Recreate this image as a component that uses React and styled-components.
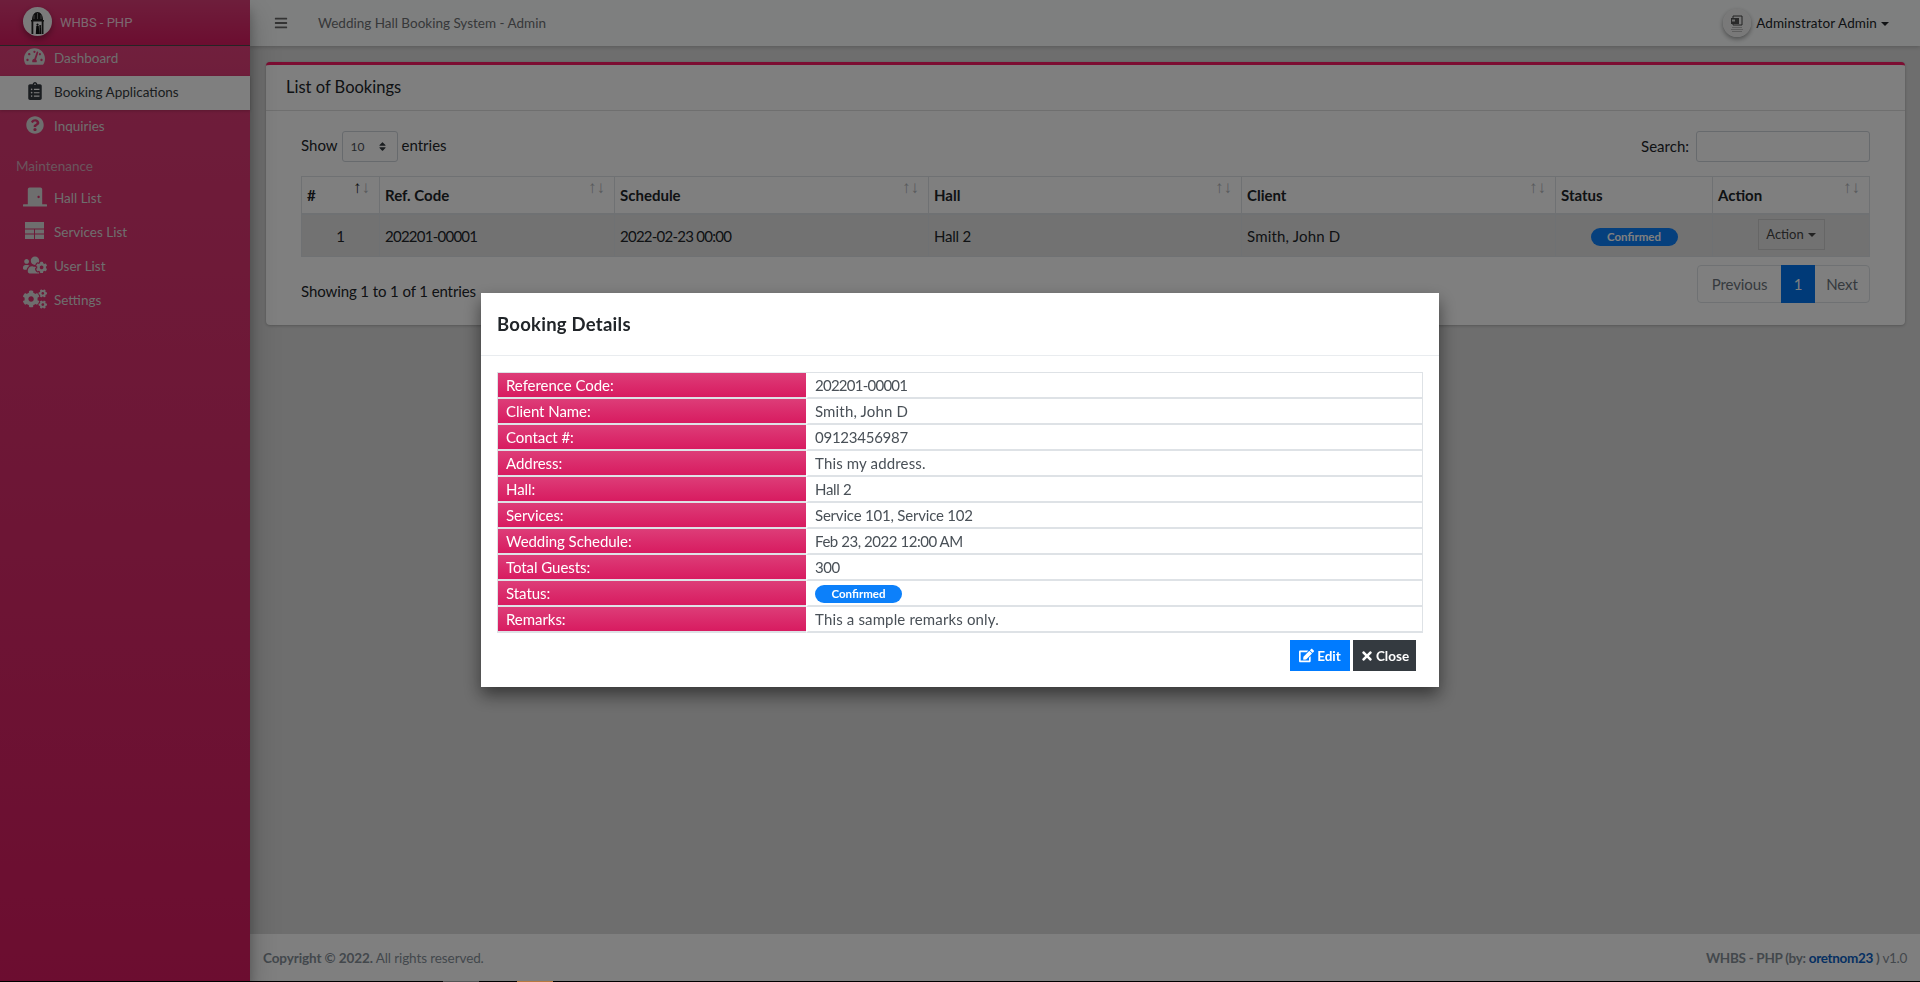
import React from "react";
import styled, { createGlobalStyle } from "styled-components";
import {
  FaTachometerAlt,
  FaClipboardList,
  FaQuestionCircle,
  FaDoorClosed,
  FaUsersCog,
  FaCogs,
  FaBars,
  FaEdit,
  FaTimes,
  FaSort,
} from "react-icons/fa";

const GlobalStyle = createGlobalStyle`
  * { box-sizing: border-box; }
  html, body { margin: 0; padding: 0; height: 100%; overflow: hidden; background: #000; }
  body { font-family: "Lato", "Liberation Sans", sans-serif; font-size: 15px; color: #212529; }
`;

const Page = styled.div`
  display: flex;
  flex-direction: column;
  height: 982px;
`;
const Shell = styled.div`
  display: flex;
  height: 981px;
`;
const TaskStrip = styled.div`
  display: flex;
  height: 1px;
  background: #000;
  padding-left: 443px;
  gap: 38px;
`;
const TaskMark = styled.span`
  width: 36px;
  background: ${(props) => props.$color};
`;

const Sidebar = styled.aside`
  width: 250px;
  flex: none;
  background: linear-gradient(180deg, #e4457f 0, #dd3a75 10%, #d81b60 100%);
  box-shadow: 0 14px 28px rgba(0, 0, 0, 0.25), 0 10px 10px rgba(0, 0, 0, 0.22);
  z-index: 2;
`;
const Brand = styled.div`
  position: relative;
  z-index: 1;
  height: 46px;
  display: flex;
  align-items: center;
  padding-left: 23px;
  gap: 8px;
  background: linear-gradient(180deg, #dd3d78, #d81b60);
  border-bottom: 1px solid #4b4b4b;
  color: rgba(255, 255, 255, 0.8);
  font-family: "Roboto", sans-serif;
  font-size: 13px;
  font-weight: 400;
`;
const Logo = styled.svg`
  width: 29px;
  height: 29px;
  margin-top: -3px;
  border-radius: 50%;
  box-shadow: 0 3px 6px rgba(0, 0, 0, 0.35);
  flex: none;
`;
const Nav = styled.nav`
  display: flex;
  flex-direction: column;
  margin-top: -4px;
`;
const NavItem = styled.a`
  height: 34px;
  display: flex;
  align-items: center;
  padding-bottom: 2px;
  font-size: 13.5px;
  color: ${(props) => (props.$active ? "#343a40" : "#dcdcdc")};
  background: ${(props) => (props.$active ? "#ffffff" : "transparent")};
  box-shadow: ${(props) => (props.$active ? "0 1px 3px rgba(0,0,0,.2)" : "none")};
`;
const NavIcon = styled.span`
  width: 54px;
  flex: none;
  display: flex;
  justify-content: center;
  padding-left: 20px;
  padding-right: 5px;
  margin-top: -3px;
  font-size: ${(props) => props.$size || 18}px;
`;
const NavHeader = styled.div`
  height: 36px;
  padding: 14px 0 0 16px;
  font-size: 13.5px;
  color: #d0d0d0;
  opacity: 0.75;
  margin-bottom: 2px;
`;

const Main = styled.div`
  flex: 1;
  min-width: 0;
  display: flex;
  flex-direction: column;
  background: #dcdcdc;
`;
const TopBar = styled.header`
  height: 46px;
  flex: none;
  display: flex;
  align-items: center;
  background: #fdffff;
  padding: 0 31px 0 24px;
  box-shadow: 0 1px 4px rgba(0, 0, 0, 0.2);
  z-index: 1;
  color: #6e7073;
`;
const BarsIcon = styled.span`
  display: flex;
  font-size: 14px;
  color: #666;
  margin-right: 30px;
`;
const TopTitle = styled.span`
  flex: 1;
  font-size: 13.5px;
`;
const UserMenu = styled.div`
  display: flex;
  align-items: center;
  gap: 5px;
  color: #212529;
  font-size: 13.5px;
  letter-spacing: 0.1px;
`;
const Avatar = styled.svg`
  width: 28px;
  height: 28px;
  border-radius: 50%;
  box-shadow: 0 2px 5px rgba(0, 0, 0, 0.4);
`;
const Caret = styled.span`
  display: inline-block;
  width: 0;
  height: 0;
  margin-left: 4px;
  vertical-align: 2px;
  border-top: 4.5px solid currentColor;
  border-left: 4.5px solid transparent;
  border-right: 4.5px solid transparent;
`;

const Content = styled.main`
  flex: 1;
  padding: 16px 15px 0 16px;
`;
const Card = styled.section`
  height: 263px;
  background: #fff;
  border-top: 3px solid #f81a64;
  border-radius: 4px;
  box-shadow: 0 0 1px rgba(0, 0, 0, 0.125), 0 1px 3px rgba(0, 0, 0, 0.2);
`;
const CardHeader = styled.div`
  height: 46px;
  display: flex;
  align-items: center;
  padding-left: 20px;
  padding-bottom: 2px;
  border-bottom: 1px solid rgba(0, 0, 0, 0.125);
  font-size: 16.5px;
  font-weight: 400;
`;
const CardBody = styled.div`
  padding: 20px 35px 0 35px;
`;
const ToolRow = styled.div`
  display: flex;
  justify-content: space-between;
  align-items: center;
  height: 31px;
  margin-bottom: 14px;
`;
const ToolGroup = styled.label`
  display: flex;
  align-items: center;
  gap: ${(props) => props.$gap || 4}px;
`;
const ToolText = styled.span`
  margin-bottom: ${(props) => props.$lift || 0}px;
`;
const PageSize = styled.div`
  width: 56px;
  height: 31px;
  display: flex;
  align-items: center;
  justify-content: space-between;
  padding: 0 9px 0 8px;
  border: 1px solid #ced4da;
  border-radius: 3px;
  font-size: 12px;
  color: #495057;
`;
const SearchInput = styled.input`
  width: 174px;
  height: 31px;
  border: 1px solid #ced4da;
  border-radius: 3px;
  background: #fff;
`;
const Table = styled.table`
  width: 100%;
  table-layout: fixed;
  border-collapse: collapse;
  font-size: 15px;
`;
const Th = styled.th`
  position: relative;
  height: 37px;
  padding: 0 5px;
  text-align: left;
  font-weight: 700;
  border: 1px solid #dee2e6;
  border-bottom-width: 2px;
`;
const SortMark = styled.span`
  position: absolute;
  top: 2px;
  right: 9px;
  display: flex;
  font-family: "Liberation Sans", sans-serif;
  font-size: 17px;
  font-weight: 400;
  line-height: 18px;
`;
const Arrow = styled.span`
  color: ${(props) => (props.$on ? "#212529" : "#b0b4b8")};
`;
const Td = styled.td`
  height: 43px;
  padding: 2px 5px 0;
  background: rgba(0, 0, 0, 0.1);
  border: 1px solid #dee2e6;
  text-align: ${(props) => props.$align || "left"};
  letter-spacing: ${(props) => props.$track ?? -0.2}px;
`;
const Badge = styled.span`
  display: inline-block;
  width: ${(props) => props.$width}px;
  height: 18px;
  line-height: 18px;
  border-radius: 9px;
  background: #0c80fa;
  color: #fff;
  font-size: 11.5px;
  font-weight: 700;
  letter-spacing: 0;
  text-align: center;
`;
const ActionButton = styled.button`
  width: 67px;
  height: 31px;
  margin-top: -4px;
  padding: 0;
  background: transparent;
  border: 1px solid #ccc;
  color: #444;
  font: inherit;
  font-size: 13px;
  letter-spacing: 0;
`;
const FootRow = styled.div`
  display: flex;
  justify-content: space-between;
  align-items: flex-start;
  margin-top: 8px;
`;
const Info = styled.div`
  margin-top: 17px;
  letter-spacing: -0.1px;
`;
const Pager = styled.div`
  display: flex;
  height: 38px;
  border: 1px solid #dee2e6;
  border-radius: 4px;
  color: #6c757d;
  letter-spacing: -0.1px;
`;
const PagerItem = styled.span`
  width: ${(props) => props.$width}px;
  display: flex;
  align-items: center;
  justify-content: center;
  margin: ${(props) => (props.$active ? "-1px 0" : "0")};
  background: ${(props) => (props.$active ? "#0075f0" : "transparent")};
  color: ${(props) => (props.$active ? "#fff" : "inherit")};
`;

const Footer = styled.footer`
  height: 47px;
  flex: none;
  display: flex;
  justify-content: space-between;
  align-items: center;
  padding: 0 13px;
  background: #fff;
  color: #869099;
  font-size: 13.5px;
`;
const FooterSide = styled.span`
  letter-spacing: ${(props) => props.$track}px;
`;
const FooterLink = styled.a`
  color: #0b5fc4;
  font-weight: 700;
`;

const Overlay = styled.div`
  position: fixed;
  inset: 0 0 1px 0;
  z-index: 10;
  display: flex;
  align-items: center;
  justify-content: center;
  padding-bottom: 1px;
  background: rgba(0, 0, 0, 0.5);
`;
const Modal = styled.div`
  width: 958px;
  height: 394px;
  background: #fff;
  box-shadow: 0 8px 16px rgba(0, 0, 0, 0.5);
`;
const ModalHeader = styled.div`
  height: 63px;
  display: flex;
  align-items: center;
  padding-left: 16px;
  border-bottom: 1px solid #e9ecef;
  font-size: 18.5px;
  font-weight: 700;
  letter-spacing: 0.25px;
  color: #212529;
`;
const ModalBody = styled.div`
  padding: 16px 16px 0 16px;
`;
const DetailTable = styled.table`
  width: 100%;
  table-layout: fixed;
  border-collapse: separate;
  border-spacing: 0;
  border-top: 1px solid #dee2e6;
  border-left: 1px solid #dee2e6;
  border-right: 1px solid #dee2e6;
  font-size: 15px;
`;
const LabelCell = styled.th`
  width: 308px;
  height: 26px;
  padding: 0 0 0 8px;
  text-align: left;
  font-weight: 400;
  color: #fff;
  letter-spacing: -0.05px;
  background: linear-gradient(180deg, #dd3d78, #d81b60);
  background-clip: padding-box;
  border-bottom: 2px solid #dee2e6;
`;
const ValueCell = styled.td`
  height: 26px;
  padding: 0 0 0 7px;
  color: #495057;
  letter-spacing: ${(props) => props.$track ?? 0.15}px;
  border-left: 2px solid #fff;
  border-bottom: 2px solid #dee2e6;
`;
const ModalFooter = styled.div`
  display: flex;
  justify-content: flex-end;
  gap: 3px;
  padding: 7px 7px 0 0;
`;
const FooterButton = styled.button`
  height: 31px;
  width: ${(props) => props.$width}px;
  display: flex;
  align-items: center;
  justify-content: center;
  gap: ${(props) => props.$gap}px;
  padding: 0;
  border: 0;
  background: ${(props) => props.$bg};
  color: #fff;
  font: inherit;
  font-size: 13.5px;
  font-weight: 700;
`;

// fa-table in the reference has filled cells with thin gaps
function TableIcon() {
  return (
    <svg width="19" height="17" viewBox="0 0 19 17" fill="currentColor">
      <path d="M0 0h19v6.500H0zM0 7.500h9v4H0zM10 7.500h9v4h-9zM0 12.500h9V17H0zM10 12.500h9V17h-9z" />
    </svg>
  );
}

const menu = [
  { label: "Dashboard", icon: <FaTachometerAlt />, size: 21 },
  { label: "Booking Applications", icon: <FaClipboardList />, active: true },
  { label: "Inquiries", icon: <FaQuestionCircle /> },
];
const maintenance = [
  { label: "Hall List", icon: <FaDoorClosed />, size: 24 },
  { label: "Services List", icon: <TableIcon /> },
  { label: "User List", icon: <FaUsersCog />, size: 24 },
  { label: "Settings", icon: <FaCogs />, size: 24 },
];
const columns = [
  { label: "#", width: 78, on: true },
  { label: "Ref. Code", width: 235 },
  { label: "Schedule", width: 314 },
  { label: "Hall", width: 313 },
  { label: "Client", width: 314 },
  { label: "Status", width: 157, noSort: true },
  { label: "Action", width: 157 },
];
const details = [
  { label: "Reference Code:", value: "202201-00001", track: -0.75 },
  { label: "Client Name:", value: "Smith, John D" },
  { label: "Contact #:", value: "09123456987", track: -0.25 },
  { label: "Address:", value: "This my address." },
  { label: "Hall:", value: "Hall 2", track: -0.3 },
  { label: "Services:", value: "Service 101, Service 102", track: -0.2 },
  { label: "Wedding Schedule:", value: "Feb 23, 2022 12:00 AM", track: -0.45 },
  { label: "Total Guests:", value: "300", track: -0.4 },
  { label: "Status:", value: <Badge $width={87}>Confirmed</Badge> },
  { label: "Remarks:", value: "This a sample remarks only." },
];

function HallLogo() {
  return (
    <Logo viewBox="0 0 29 29">
      <rect width="29" height="29" fill="#f6f6f6" />
      <path d="M9 13c0-5 2.500-8 5.500-8s5.500 3 5.500 8z" fill="#1c1c1c" />
      <path d="M11 12V8M14.500 12V6M18 12V8" stroke="#bbb" strokeWidth=".6" />
      <path d="M8 13h13v1.500H8zM8.500 14.500h1.800V27H8.500zM18.700 14.500h1.800V27h-1.800z" fill="#222" />
      <path d="M14.500 16.500a1.100 1.100 0 1 0 .01 0M13.300 19h2.500l.5 8h-3.500zM17.200 18a1 1 0 1 0 .01 0M16.400 20h1.700l.2 7h-1.900z" fill="#111" />
    </Logo>
  );
}

function UserAvatar() {
  return (
    <Avatar viewBox="0 0 28 28">
      <rect width="28" height="28" fill="#f3f3f3" />
      <path d="M10 7h9v9h-9z" fill="none" stroke="#444" />
      <path d="M8 9h8v6H8z" fill="#555" />
      <path d="M9 10.500h3v2H9z" fill="#ddd" />
      <path d="M9 18h10v.800H9zM8 20h12v.800H8zM9 22h10v.800H9z" fill="#aaa" />
    </Avatar>
  );
}

export default function App() {
  return (
    <Page>
      <GlobalStyle />
      <Shell>
        <Sidebar>
          <Brand>
            <HallLogo />
            <span>WHBS - PHP</span>
          </Brand>
          <Nav>
            {menu.map((m) => (
              <NavItem key={m.label} $active={m.active}>
                <NavIcon $size={m.size}>{m.icon}</NavIcon>
                {m.label}
              </NavItem>
            ))}
            <NavHeader>Maintenance</NavHeader>
            {maintenance.map((m) => (
              <NavItem key={m.label}>
                <NavIcon $size={m.size}>{m.icon}</NavIcon>
                {m.label}
              </NavItem>
            ))}
          </Nav>
        </Sidebar>
        <Main>
          <TopBar>
            <BarsIcon>
              <FaBars />
            </BarsIcon>
            <TopTitle>Wedding Hall Booking System - Admin</TopTitle>
            <UserMenu>
              <UserAvatar />
              <span>
                Adminstrator Admin
                <Caret />
              </span>
            </UserMenu>
          </TopBar>
          <Content>
            <Card>
              <CardHeader>List of Bookings</CardHeader>
              <CardBody>
                <ToolRow>
                  <ToolGroup>
                    <ToolText $lift={4}>Show</ToolText>
                    <PageSize>
                      10
                      <FaSort size={11} color="#343a40" />
                    </PageSize>
                    <ToolText $lift={4}>entries</ToolText>
                  </ToolGroup>
                  <ToolGroup $gap={7}>
                    <ToolText $lift={1}>Search:</ToolText>
                    <SearchInput type="search" />
                  </ToolGroup>
                </ToolRow>
                <Table>
                  <colgroup>
                    {columns.map((c) => (
                      <col key={c.label} width={c.width} />
                    ))}
                  </colgroup>
                  <thead>
                    <tr>
                      {columns.map((c) => (
                        <Th key={c.label}>
                          {c.label}
                          {!c.noSort && (
                            <SortMark>
                              <Arrow $on={c.on}>↑</Arrow>
                              <Arrow>↓</Arrow>
                            </SortMark>
                          )}
                        </Th>
                      ))}
                    </tr>
                  </thead>
                  <tbody>
                    <tr>
                      <Td $align="center">1</Td>
                      <Td $track={-0.75}>202201-00001</Td>
                      <Td $track={-0.75}>2022-02-23 00:00</Td>
                      <Td>Hall 2</Td>
                      <Td $track={0.18}>Smith, John D</Td>
                      <Td $align="center">
                        <Badge $width={87}>Confirmed</Badge>
                      </Td>
                      <Td $align="center">
                        <ActionButton>
                          Action
                          <Caret />
                        </ActionButton>
                      </Td>
                    </tr>
                  </tbody>
                </Table>
                <FootRow>
                  <Info>Showing 1 to 1 of 1 entries</Info>
                  <Pager>
                    <PagerItem $width={83}>Previous</PagerItem>
                    <PagerItem $width={34} $active>
                      1
                    </PagerItem>
                    <PagerItem $width={54}>Next</PagerItem>
                  </Pager>
                </FootRow>
              </CardBody>
            </Card>
          </Content>
          <Footer>
            <FooterSide $track={-0.1}>
              <strong>Copyright © 2022.</strong> All rights reserved.
            </FooterSide>
            <FooterSide $track={-0.3}>
              <strong>
                WHBS - PHP (by: <FooterLink>oretnom23</FooterLink> )
              </strong>{" "}
              v1.0
            </FooterSide>
          </Footer>
        </Main>
      </Shell>
      <TaskStrip>
        <TaskMark $color="#555" />
        <TaskMark $color="#b9793f" />
      </TaskStrip>
      <Overlay>
        <Modal>
          <ModalHeader>Booking Details</ModalHeader>
          <ModalBody>
            <DetailTable>
              <tbody>
                {details.map((d) => (
                  <tr key={d.label}>
                    <LabelCell>{d.label}</LabelCell>
                    <ValueCell $track={d.track}>{d.value}</ValueCell>
                  </tr>
                ))}
              </tbody>
            </DetailTable>
            <ModalFooter>
              <FooterButton $width={60} $gap={3} $bg="#007bff">
                <FaEdit size={15} /> Edit
              </FooterButton>
              <FooterButton $width={63} $gap={2} $bg="#343a40">
                <FaTimes size={14} /> Close
              </FooterButton>
            </ModalFooter>
          </ModalBody>
        </Modal>
      </Overlay>
    </Page>
  );
}
